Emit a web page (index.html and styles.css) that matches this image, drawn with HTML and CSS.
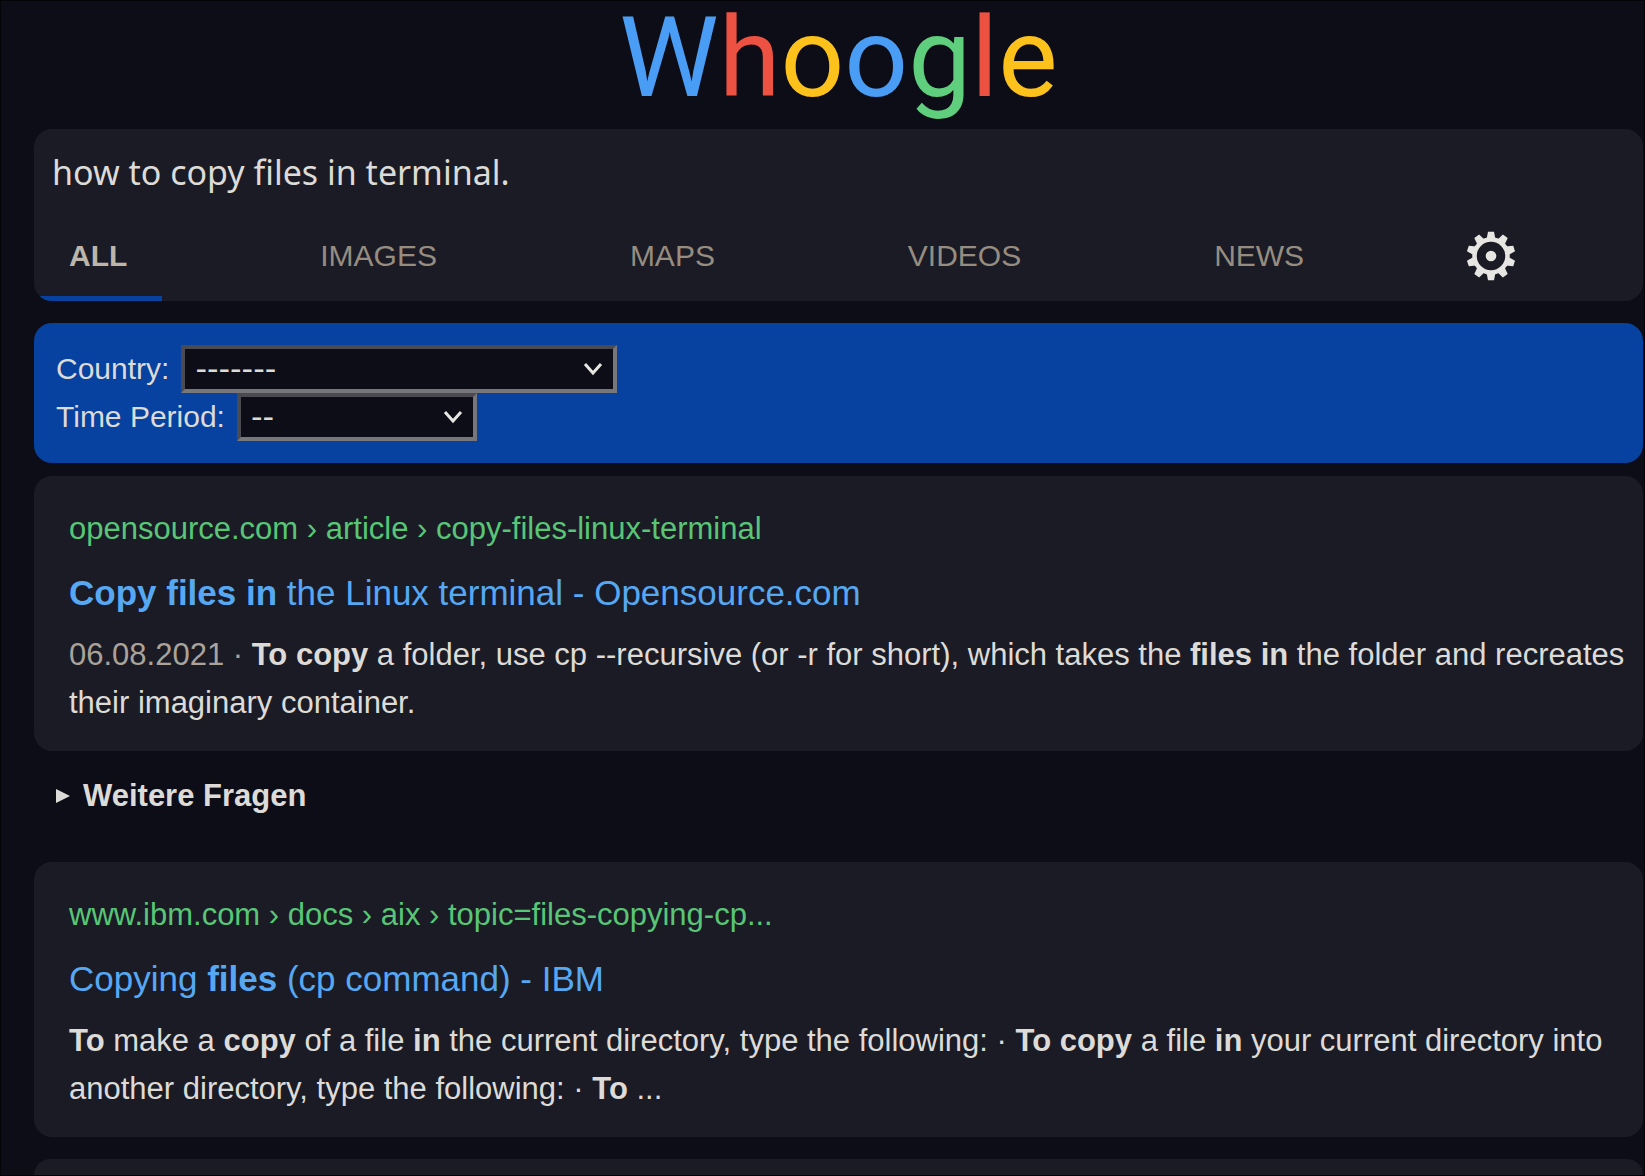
FILE: index.html
```html
<!DOCTYPE html>
<html lang="de">
<head>
<meta charset="utf-8">
<meta name="viewport" content="width=device-width, initial-scale=1">
<title>how to copy files in terminal. - Whoogle Search</title>
<link rel="stylesheet" href="styles.css">
</head>
<body>
<header>
  <a class="logo" href="#"><span class="blue">W</span><span class="red">h</span><span class="yellow">o</span><span class="blue">o</span><span class="green">g</span><span class="red">l</span><span class="yellow">e</span></a>
  <form class="card search">
    <input class="query" type="text" aria-label="Search" value="how to copy files in terminal.">
    <nav class="tabs">
      <a class="tab active" href="#">ALL</a>
      <a class="tab" href="#">IMAGES</a>
      <a class="tab" href="#">MAPS</a>
      <a class="tab" href="#">VIDEOS</a>
      <a class="tab" href="#">NEWS</a>
      <button class="settings" type="button" aria-label="Settings">
        <svg viewBox="-25 -25 50 50" width="50" height="50" fill="currentColor">
          <circle r="16.5" fill="none" stroke="currentColor" stroke-width="4.5"/>
          <circle r="5.3"/>
          <path id="tooth" d="M-4.4-17L-3-24.3H3L4.4-17Z"/>
          <use href="#tooth" transform="rotate(36)"/>
          <use href="#tooth" transform="rotate(72)"/>
          <use href="#tooth" transform="rotate(108)"/>
          <use href="#tooth" transform="rotate(144)"/>
          <use href="#tooth" transform="rotate(180)"/>
          <use href="#tooth" transform="rotate(216)"/>
          <use href="#tooth" transform="rotate(252)"/>
          <use href="#tooth" transform="rotate(288)"/>
          <use href="#tooth" transform="rotate(324)"/>
        </svg>
      </button>
    </nav>
  </form>
</header>
<form class="filters">
  <div class="field"><label for="country">Country:</label><select id="country" class="wide"><option>-------</option></select></div>
  <div class="field"><label for="period">Time Period:</label><select id="period"><option>--</option></select></div>
</form>
<main>
  <article class="card result">
    <a class="url" href="#">opensource.com › article › copy-files-linux-terminal</a>
    <h3><a href="#"><b>Copy files in</b> the Linux terminal - Opensource.com</a></h3>
    <p><span class="date">06.08.2021 · </span><b>To copy</b> a folder, use cp --recursive (or -r for short), which takes the <b>files in</b> the folder and recreates their imaginary container.</p>
  </article>
  <details>
    <summary>Weitere Fragen</summary>
  </details>
  <article class="card result">
    <a class="url" href="#">www.ibm.com › docs › aix › topic=files-copying-cp...</a>
    <h3><a href="#">Copying <b>files</b> (cp command) - IBM</a></h3>
    <p><b>To</b> make a <b>copy</b> of a file <b>in</b> the current directory, type the following: · <b>To copy</b> a file <b>in</b> your current directory into another directory, type the following: · <b>To</b> ...</p>
  </article>
  <div class="card next"></div>
</main>
</body>
</html>
```
FILE: styles.css
```css
* { box-sizing: border-box; }
body {
  margin: 0;
  min-height: 100vh;
  display: flex;
  flex-direction: column;
  padding: 0 1px 0 33px;
  border: 1px solid #030308;
  background: #0d0d18;
  color: #dddbd8;
  font-family: "Liberation Sans", Arial, sans-serif;
  font-size: 30px;
  line-height: 48px;
}
a { color: inherit; text-decoration: none; }
.card { background: #1b1b26; border-radius: 18px; }
.logo {
  display: block;
  height: 128px;
  text-align: center;
  font-family: Roboto, sans-serif;
  font-size: 112px;
  line-height: 113px;
}
.blue { color: #4a9df5; }
.red { color: #ec5142; }
.yellow { color: #fcc21b; }
.green { color: #60cf7d; }
.search { overflow: hidden; }
.query {
  display: block;
  width: 100%;
  height: 86px;
  padding: 0 18px;
  border: 0;
  outline: 0;
  background: none;
  color: #dddbd8;
  font-family: "Noto Sans", sans-serif;
  font-size: 34px;
}
.tabs { display: flex; justify-content: space-between; height: 86px; }
.tabs::after { content: ""; }
.tab { padding: 17px 35px 0; color: #968d80; }
.active { color: #bdb5aa; font-weight: bold; border-bottom: 5px solid #0742a0; }
.settings {
  display: flex;
  padding: 16px 4px 0;
  border: 0;
  background: none;
  color: #e8e6e2;
}
.filters {
  margin: 22px 0 13px;
  padding: 22px;
  border-radius: 18px;
  background: #0742a0;
}
.field { display: flex; gap: 12px; }
select {
  appearance: none;
  width: 240px;
  height: 48px;
  padding: 0 10px;
  border: 4px solid;
  border-color: #4b4a50 #77767b #77767b #4b4a50;
  border-radius: 0;
  background: #0d0d18 url("data:image/svg+xml,%3Csvg xmlns='http://www.w3.org/2000/svg' width='20' height='14'%3E%3Cpath d='M2 2l8 9 8-9' fill='none' stroke='%23e8e6e2' stroke-width='3'/%3E%3C/svg%3E") no-repeat right 10px center;
  color: #dddbd8;
  font-family: "DejaVu Sans", sans-serif;
  font-size: 32px;
}
.wide { width: 436px; }
main { flex: 1; display: flex; flex-direction: column; font-size: 31px; }
.result { padding: 29px 16px 24px 35px; }
.url { display: block; color: #58c676; }
h3 { margin: 14px 0 12px; font-size: 35px; font-weight: normal; line-height: 52px; color: #56a8f3; }
p { margin: 0; }
.date { color: #aaa39a; }
details { padding: 21px 22px 42px; }
summary { display: flex; align-items: center; gap: 13px; font-weight: bold; }
summary::before {
  content: "";
  border-left: 14px solid;
  border-top: 7px solid transparent;
  border-bottom: 7px solid transparent;
}
.next { flex: 1; margin-top: 22px; border-radius: 18px 18px 0 0; }
```
